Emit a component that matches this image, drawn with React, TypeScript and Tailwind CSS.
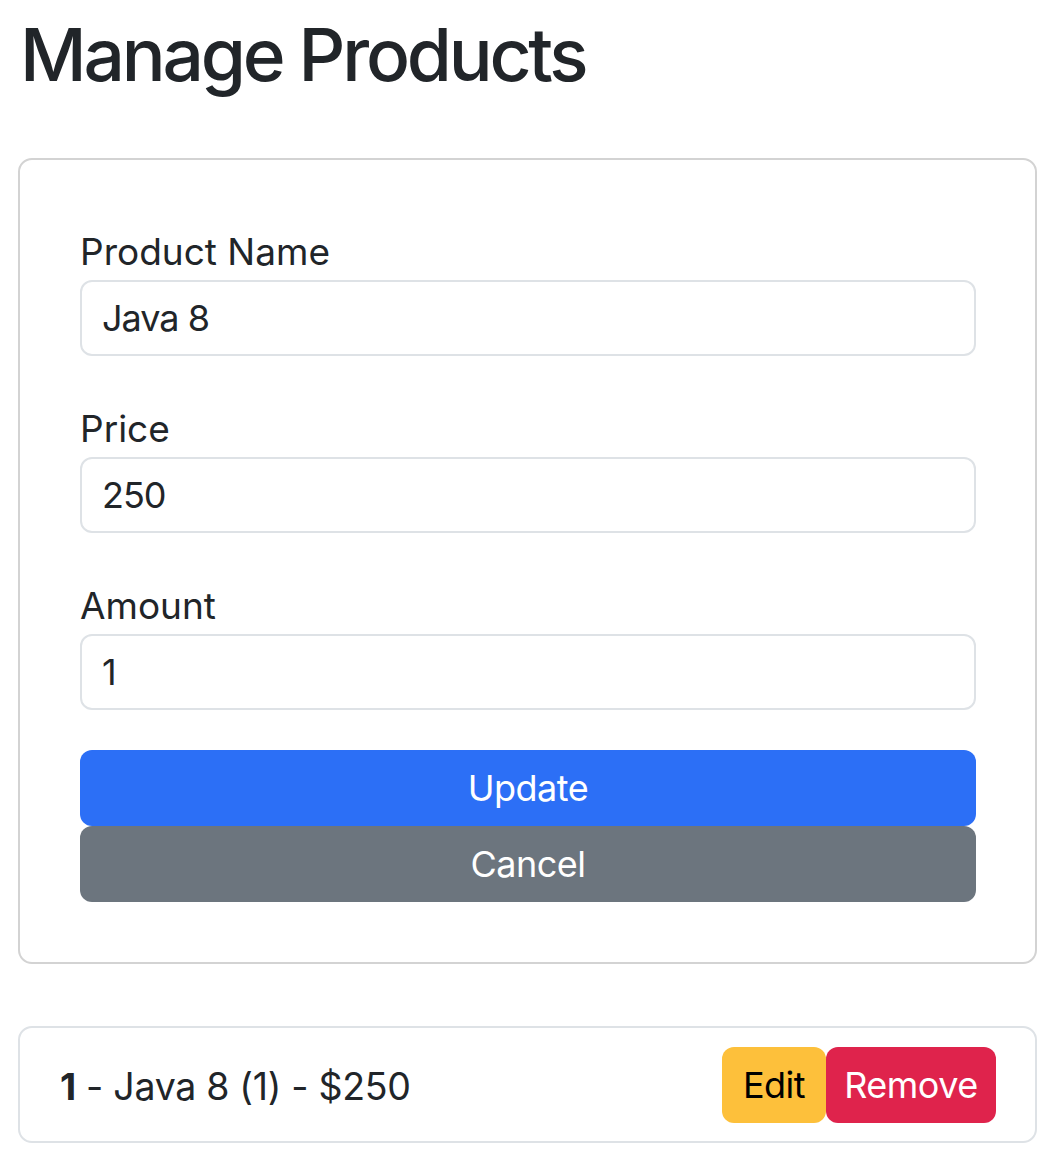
import React from "react";

const font = { fontFamily: "Inter, 'Noto Sans', 'Liberation Sans', sans-serif" };

function Field({ label, value, className = "" }: { label: string; value: string; className?: string }) {
  return (
    <div className={className}>
      <label className="block text-[37px] leading-[44px] text-[#212529] mb-[6px]">{label}</label>
      <div className="h-[76px] border-2 border-[#dee2e6] rounded-[12px] px-[20px] flex items-center text-[36px] tracking-[-1px] text-[#212529]">
        {value}
      </div>
    </div>
  );
}

export default function App() {
  return (
    <div className="bg-white min-h-[1164px] text-[#212529]" style={font}>
      <div className="pl-[18px]">
        <h1 className="pt-[13px] pl-[2px] text-[73px] leading-[84px] tracking-[-3.2px] font-medium text-[#212529]">Manage Products</h1>
        <div className="w-[1019px] mt-[61px] border-2 border-[#d3d3d3] rounded-[14px] pt-[70px] pb-[60px] pl-[60px] pr-[59px]">
          <Field label="Product Name" value="Java 8" />
          <Field label="Price" value="250" className="mt-[51px]" />
          <Field label="Amount" value="1" className="mt-[51px]" />
          <div className="mt-[40px] flex flex-col">
            <button className="h-[76px] rounded-[12px] bg-[#2c6ff6] text-white text-[36px] tracking-[-0.5px]">Update</button>
            <button className="h-[76px] rounded-[12px] bg-[#6c757e] text-white text-[36px] tracking-[-0.5px]">Cancel</button>
          </div>
        </div>
        <div className="w-[1019px] mt-[62px] border-2 border-[#dee2e6] rounded-[14px] pt-[19px] pb-[18px] pl-[40px] pr-[39px] flex items-center justify-between">
          <div className="text-[37.5px] tracking-[-0.3px] text-[#212529] pt-[4px]">
            <span className="font-bold">1</span> - Java 8 (1) - $250
          </div>
          <div className="flex">
            <button className="w-[104px] h-[76px] rounded-[12px] bg-[#fdc03b] text-black text-[36px] tracking-[-0.5px]">Edit</button>
            <button className="w-[170px] h-[76px] rounded-[12px] bg-[#df234c] text-white text-[36px] tracking-[-0.5px]">Remove</button>
          </div>
        </div>
      </div>
    </div>
  );
}
